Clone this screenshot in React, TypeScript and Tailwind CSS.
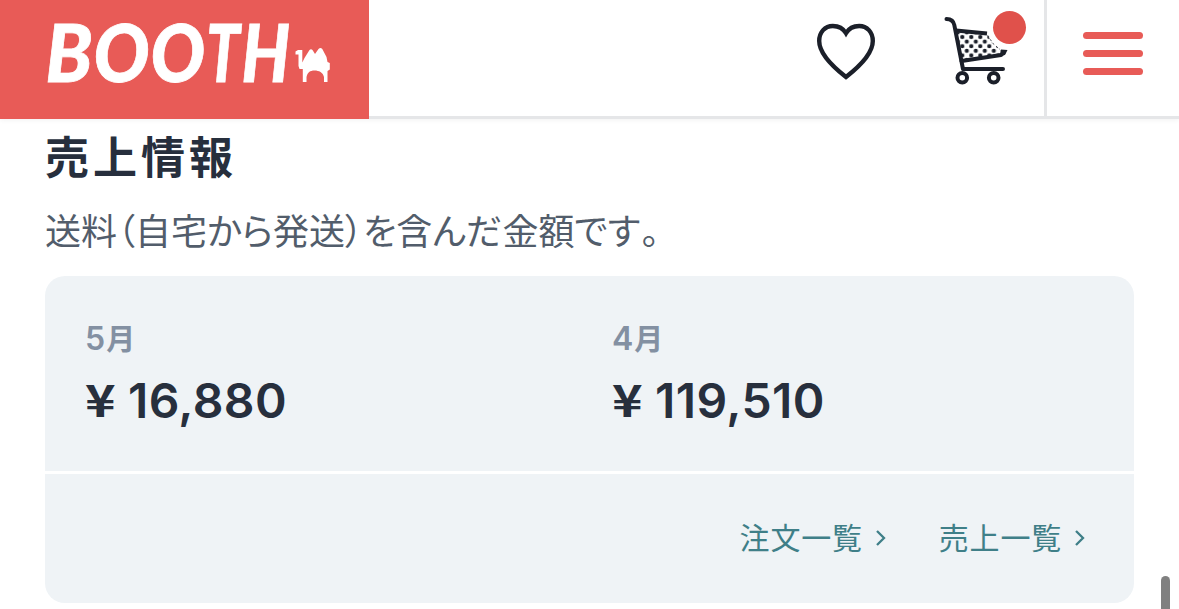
import type { ReactNode } from "react";

const logoLetters = [
  { char: "B", x: 45.5, width: 47 },
  { char: "O", x: 93.5, width: 56 },
  { char: "O", x: 150.5, width: 54.5 },
  { char: "T", x: 206.3, width: 33.5 },
  { char: "H", x: 241.5, width: 48.5 },
];

function Logo() {
  return (
    <a className="flex h-[119px] w-[369px] shrink-0 bg-[#e85b57]" aria-label="BOOTH">
      <svg width="369" height="119" viewBox="0 0 369 119" fill="#fff">
        {logoLetters.map((letter) => (
          <text
            key={letter.x}
            x={letter.x}
            y="82"
            textLength={letter.width}
            lengthAdjust="spacingAndGlyphs"
            stroke="#fff"
            strokeWidth=".8"
            className="font-['Lato',sans-serif] text-[80px] font-black italic"
          >
            {letter.char}
          </text>
        ))}
        <path d="M295.500 51.500L298 50H302.300V62.500L304.500 58L309.500 50Q311 48.500 312.500 50L315 54L318.500 49Q320.500 47 322.300 49L326.500 57L327.500 62L329.800 63V69.500L327.500 71V82H324V77C323 72.500 319 70.500 314.500 70.500C310 70.500 307.500 72.500 306.500 77V82H302.800V69H299.500L298.500 66V54.500H295.500Z" />
      </svg>
    </a>
  );
}

function Heart() {
  return (
    <svg width="60" height="60" viewBox="0 0 60 60" fill="none" stroke="#1b1f29" strokeWidth="4.4">
      <path d="M30 56C21 49 3.200 33.500 3.200 20C3.200 11 9 5 16.800 5C23 5 27.500 8 30 12.200C32.500 8 37 5 43.200 5C51 5 56.800 11 56.800 20C56.800 33.500 39 49 30 56Z" />
    </svg>
  );
}

function Cart() {
  return (
    <svg width="84" height="78" viewBox="944 10 84 78" fill="none">
      <defs>
        <pattern id="dots" x="962.300" y="37" width="9" height="9.200" patternUnits="userSpaceOnUse">
          <circle cx="4.500" cy="4.600" r="2.100" fill="#1b1f29" />
          <circle cx="0" cy="0" r="2.100" fill="#1b1f29" />
          <circle cx="9" cy="0" r="2.100" fill="#1b1f29" />
          <circle cx="0" cy="9.200" r="2.100" fill="#1b1f29" />
          <circle cx="9" cy="9.200" r="2.100" fill="#1b1f29" />
        </pattern>
      </defs>
      <path d="M957 32L987 34L992 43L1002 51L1000 54L961 60Z" fill="url(#dots)" />
      <g stroke="#1b1f29" strokeWidth="4" strokeLinecap="round" strokeLinejoin="round">
        <path d="M946.500 19C951 19.200 953.500 20.500 954.300 25L963 69H1003" />
        <path d="M956 30.500L987 33.500" strokeLinecap="butt" />
        <path d="M961.500 61L1001 55L1004 52" />
        <circle cx="962.300" cy="77.700" r="4.800" />
        <circle cx="993.700" cy="77.700" r="4.800" />
      </g>
      <path d="M1001 49.500L1007.500 50L1005 55L1000 56Z" fill="#1b1f29" />
      <path d="M988 35.500L992.500 43L1000 49.500" stroke="#1b1f29" strokeWidth=".8" strokeDasharray="2 2.500" />
      <circle cx="1009.500" cy="27.500" r="16.500" fill="#e0514b" />
    </svg>
  );
}

function Month({ digit, amount }: { digit: string; amount: string }) {
  return (
    <div className="w-[527px] shrink-0">
      <div className="flex h-8 items-center gap-px text-[30px] leading-8 font-bold text-[#8390a2]">
        <span className="font-['Inter',sans-serif] text-[32px] font-semibold">{digit}</span>
        <span className="pb-[4px] text-[29px]">月</span>
      </div>
      <div className="mt-[19px] flex h-[54px] items-center text-[48px] leading-[54px] text-[#272f3d]">
        <span className="w-[43px] shrink-0 pb-[6px] text-[44px] font-bold">
          <span className="inline-block origin-left scale-x-[1.18]">¥</span>
        </span>
        <span className="font-['Inter',sans-serif] font-semibold tracking-[0.4px]">{amount}</span>
      </div>
    </div>
  );
}

function MoreLink({ children }: { children: ReactNode }) {
  return (
    <a className="flex items-center gap-[12px] text-[30px] leading-[44px] tracking-[0.8px] text-[#3f7f88]">
      <span className="pb-[5px]">{children}</span>
      <svg className="mb-[2px]" width="12" height="18" viewBox="0 0 12 18" fill="none" stroke="currentColor" strokeWidth="2.300">
        <path d="M2 2L9 9L2 16" />
      </svg>
    </a>
  );
}

export default function App() {
  return (
    <div className="relative h-[609px] w-[1179px] overflow-hidden bg-white font-['Noto_Sans_CJK_JP',sans-serif]">
      <header className="flex h-[119px] shadow-[0_1px_5px_rgba(0,0,0,0.06)]">
        <Logo />
        <div className="flex flex-1 border-b-[3px] border-[#e5e6e8]">
          <div className="flex flex-1 justify-end pr-4">
            <div className="mt-[21px] mr-[68px]">
              <Heart />
            </div>
            <div className="mt-[10px]">
              <Cart />
            </div>
          </div>
          <div className="flex w-[135px] flex-col gap-[11px] border-l-[3px] border-[#e5e6e8] pt-[32px] pl-[36px]">
            <div className="h-[7px] w-[60px] rounded-full bg-[#e85b57]" />
            <div className="h-[7px] w-[60px] rounded-full bg-[#e85b57]" />
            <div className="h-[7px] w-[60px] rounded-full bg-[#e85b57]" />
          </div>
        </div>
      </header>
      <main className="px-[45px]">
        <h1 className="h-[78px] pt-[4px] text-[44px] leading-[64px] font-bold tracking-[4px] text-[#272f3d]">売上情報</h1>
        <p className="h-[79px] pt-[6px] text-[36px] leading-[52px] whitespace-nowrap text-[#525d6b] [font-feature-settings:'palt']">
          送料（自宅から発送）を含んだ金額です<span className="pl-px">。</span>
        </p>
        <section className="overflow-hidden rounded-[20px] bg-[#eff3f6]">
          <div className="flex h-[195px] pt-[47px] pl-[40px]">
            <Month digit="5" amount="16,880" />
            <Month digit="4" amount="119,510" />
          </div>
          <div className="flex h-[132px] items-center justify-end gap-[52px] border-t-[3px] border-white pr-[48px]">
            <MoreLink>注文一覧</MoreLink>
            <MoreLink>売上一覧</MoreLink>
          </div>
        </section>
      </main>
      <div className="absolute top-[576px] left-[1161px] h-[60px] w-[9px] rounded-full bg-[#808080]" />
    </div>
  );
}
